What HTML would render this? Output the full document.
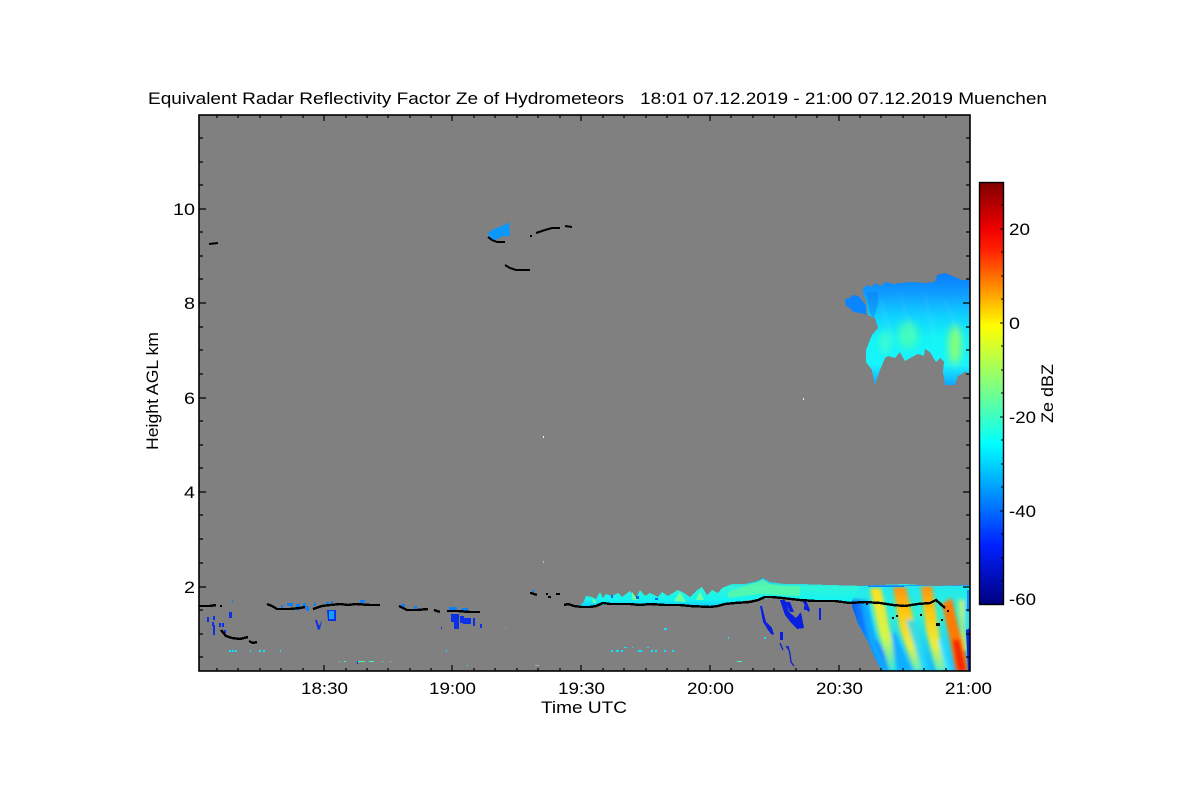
<!DOCTYPE html>
<html><head><meta charset="utf-8"><style>
html,body{margin:0;padding:0;background:#fff;width:1200px;height:800px;overflow:hidden}
svg{display:block}
text{font-family:"Liberation Sans",sans-serif;fill:#000;font-size:17px}
.j{shape-rendering:crispEdges}
</style></head><body>
<svg width="1200" height="800" viewBox="0 0 1200 800" xmlns="http://www.w3.org/2000/svg">
<defs>
<linearGradient id="jet" x1="0" y1="0" x2="0" y2="1">
<stop offset="0" stop-color="#800000"/><stop offset=".11" stop-color="#f00000"/><stop offset=".16" stop-color="#ff2000"/><stop offset=".34" stop-color="#ffff00"/><stop offset=".5" stop-color="#70ff90"/><stop offset=".62" stop-color="#00ffff"/><stop offset=".86" stop-color="#0020ff"/><stop offset="1" stop-color="#000080"/>
</linearGradient>
<linearGradient id="cloud" x1="0" y1="0" x2="0" y2="1">
<stop offset="0" stop-color="#0a7cff"/><stop offset=".2" stop-color="#10a0ff"/><stop offset=".38" stop-color="#10d0ff"/><stop offset=".58" stop-color="#14f4f4"/><stop offset=".82" stop-color="#18f4ff"/><stop offset="1" stop-color="#10a8ff"/>
</linearGradient>
<linearGradient id="band" x1="0" y1="0" x2="0" y2="1">
<stop offset="0" stop-color="#10b0ff"/><stop offset=".3" stop-color="#30f4d8"/><stop offset=".75" stop-color="#14f4f0"/><stop offset="1" stop-color="#10c8ff"/>
</linearGradient>
<linearGradient id="storm" x1="0" y1="0" x2="0" y2="1">
<stop offset="0" stop-color="#20e8f0"/><stop offset=".35" stop-color="#30f0d8"/><stop offset="1" stop-color="#14b8ff"/>
</linearGradient>
<linearGradient id="yl" x1="0" y1="0" x2="0" y2="1">
<stop offset="0" stop-color="#ffe020"/><stop offset=".6" stop-color="#d0f850"/><stop offset="1" stop-color="#30e8e0"/>
</linearGradient>
<linearGradient id="or" x1="0" y1="0" x2="0" y2="1">
<stop offset="0" stop-color="#ff9010"/><stop offset=".3" stop-color="#ffc810"/><stop offset=".7" stop-color="#e8f040"/><stop offset="1" stop-color="#60f0c0"/>
</linearGradient>
<filter id="b1" x="-30%" y="-30%" width="160%" height="160%"><feGaussianBlur stdDeviation="1.8"/></filter>
<filter id="b2" x="-40%" y="-40%" width="180%" height="180%"><feGaussianBlur stdDeviation="4"/></filter>
<clipPath id="stormClip"><path d="M860 586L880 585L905 584L935 586L970 585V671H882L876 660L868 642L858 624L852 606L852 600Z"/></clipPath>
<clipPath id="cloudClip"><path d="M863 288L868 284L880 285L886 282L900 283L935 282L937 275L945 273L955 277L970 280V375L965 371L958 376L955 385L945 385L943 370L938 360L930 352L925 349L924 356L910 357L905 361L900 355L885 358L880 370L875 385L872 370L866 360L866 350L872 335L878 328L875 318L868 315L866 298L863 295Z"/></clipPath>
</defs>
<rect width="1200" height="800" fill="#fff"/>
<rect x="199" y="115" width="771" height="556" fill="#808080"/>

<!-- upper right cloud -->
<path class="j" d="M845 299L850 298L852 295L858 296L862 300L866 306L866 315L860 313L853 312L850 308L846 306Z" fill="#0a84ff"/>
<path class="j" d="M863 288L868 285L871 287L875 283L880 286L886 282L893 284L900 283L912 282L925 283L935 282L937 275L945 273L950 275L955 277L962 280L970 280V375L965 371L962 374L958 376L955 385L945 385L943 372L944 362L940 358L936 362L930 352L925 349L924 356L918 354L912 357L905 361L900 352L895 358L888 356L885 358L880 370L875 385L872 370L866 362L866 350L870 340L872 335L878 328L875 318L868 315L866 300L863 295Z" fill="url(#cloud)"/>
<g clip-path="url(#cloudClip)">
<ellipse cx="955" cy="345" rx="6" ry="20" fill="#90ff70" filter="url(#b2)"/>
<ellipse cx="908" cy="335" rx="10" ry="14" fill="#50ffb0" filter="url(#b2)" opacity=".8"/>
<ellipse cx="885" cy="342" rx="5" ry="12" fill="#50ffc0" filter="url(#b2)" opacity=".8"/>
<path d="M866 292H878V304L874 318L870 314Z" fill="#0a78f0" opacity=".45"/>
<path d="M880 300L895 345M900 295L915 340M925 295L935 340M945 300L960 340" stroke="#ffffff" stroke-width="3" opacity=".07" filter="url(#b1)"/>
</g>

<!-- top features -->
<path class="j" d="M488 233L494 229L502 226L509 222L510 236L503 236L497 239L492 241Z" fill="#0a98ff"/>
<g fill="none" stroke="#000" stroke-width="2">
<path d="M488 237L492 240L497 242H505"/>
<path d="M505 265L510 268L516 270H530"/>
<path d="M536 233L545 230L552 228L560 228M565 226L572 227"/>
<path d="M209 244L218 243"/>
</g>
<rect x="530" y="235" width="2" height="2"/>

<!-- low-level band 19:30-20:40 -->
<path class="j" d="M578 606L583 603L586 596L592 597L596 599L600 592L603 598L606 594L612 596L618 593L622 597L630 591L636 598L640 590L645 596L650 593L658 597L662 592L668 596L678 590L684 593L690 597L696 591L702 587L707 595L712 590L718 593L722 588L732 584L745 584L757 581L763 578L770 582L785 584L800 584L830 585L865 586V603L840 602L800 601L770 598L750 600L738 602L710 607L680 606L650 605L620 605L600 605L588 606Z" fill="url(#band)"/>
<path class="j" d="M728 598V592L745 586L757 582L763 579L770 584L785 586L800 586V596L760 594Z" fill="#60f8a0" opacity=".75"/>
<path d="M593 603L592 598L596 601L596 603ZM632 600L632 592L638 600ZM674 601L680 592L686 602ZM696 600L700 591L704 600Z" fill="#70ffa0"/>
<g fill="#0a60f0">
<rect x="636" y="596" width="3" height="3"/><rect x="611" y="595" width="2" height="3"/><rect x="655" y="598" width="3" height="2"/>
</g>

<!-- streaks below band -->
<g fill="#0a20e0" class="j">
<path d="M760 606L762 606L766 622L772 628L774 634L772 635L768 630L763 622Z"/>
<path d="M780 600L785 600L789 612L796 618L801 612L804 628L797 629L792 624L785 615Z"/>
<path d="M785 602L790 602L794 612L790 612Z"/>
<path d="M802 600L806 600L810 610L808 612Z"/>
<rect x="780" y="632" width="3" height="8"/>
<rect x="819" y="608" width="2" height="12"/>
<rect x="804" y="606" width="3" height="4"/>
</g>
<g fill="none" stroke="#0a20d0" stroke-width="1.3">
<path d="M780 643L783 650M788 646L790 654L791 662L794 666M786 646L789 650"/>
</g>

<!-- low cyan speckles -->
<g fill="#10e0ff">
<rect x="229" y="650" width="2" height="2"/><rect x="232" y="650" width="2" height="2"/><rect x="235" y="650" width="2" height="2"/><rect x="250" y="650" width="1" height="2"/><rect x="259" y="650" width="2" height="2"/><rect x="263" y="650" width="2" height="2"/><rect x="280" y="650" width="1" height="2"/><rect x="446" y="650" width="1" height="2"/>
<rect x="611" y="650" width="2" height="2"/><rect x="616" y="650" width="3" height="2"/><rect x="621" y="650" width="2" height="2"/><rect x="638" y="650" width="4" height="2"/><rect x="651" y="650" width="2" height="2"/><rect x="655" y="650" width="2" height="2"/><rect x="664" y="650" width="2" height="2"/><rect x="672" y="650" width="2" height="2"/>
<rect x="624" y="647" width="3" height="1"/><rect x="632" y="647" width="1" height="1"/><rect x="647" y="647" width="2" height="1"/><rect x="664" y="628" width="3" height="2"/><rect x="728" y="637" width="1" height="2"/><rect x="764" y="637" width="2" height="2"/>
</g>
<g fill="#40ffb0">
<rect x="339" y="661" width="1" height="1"/><rect x="344" y="661" width="2" height="1"/><rect x="358" y="661" width="7" height="1"/><rect x="369" y="661" width="5" height="1"/><rect x="382" y="661" width="1" height="1"/><rect x="390" y="661" width="1" height="1"/><rect x="737" y="661" width="5" height="1"/><rect x="467" y="665" width="1" height="1"/>
</g>
<rect x="357" y="661" width="1" height="3" fill="#1040d0"/>
<rect x="543" y="436" width="1" height="2" fill="#cfe"/><rect x="803" y="398" width="1" height="2" fill="#cfe"/><rect x="543" y="561" width="1" height="2" fill="#bbc"/>
<rect x="505" y="628" width="1" height="1" fill="#aaa"/><rect x="535" y="665" width="4" height="1" fill="#aaa"/>

<!-- blue low-left streaks -->
<g fill="#0a30e8">
<rect x="207" y="617" width="2" height="5"/><rect x="213" y="616" width="2" height="4"/><rect x="212" y="622" width="2" height="4"/><rect x="213" y="625" width="2" height="10"/><rect x="219" y="623" width="2" height="4"/><rect x="222" y="623" width="2" height="4"/><rect x="229" y="612" width="3" height="6"/><rect x="224" y="630" width="2" height="3"/>
<path d="M315 620L317 620L319 626L322 620L320 629L318 630Z"/>
<path d="M327 610H336V621H328Z"/>
<rect x="451" y="614" width="8" height="8"/><rect x="454" y="620" width="5" height="9"/><rect x="460" y="616" width="4" height="7"/><rect x="463" y="618" width="8" height="6"/><rect x="473" y="618" width="2" height="8"/><rect x="480" y="624" width="2" height="4"/><rect x="441" y="627" width="1" height="2"/>
</g>
<rect x="329" y="611" width="5" height="8" fill="#10a0ff"/>
<g fill="#0a80ff">
<rect x="232" y="600" width="1" height="3"/><rect x="281" y="605" width="2" height="4"/><rect x="287" y="603" width="6" height="3"/><rect x="296" y="604" width="4" height="6"/><rect x="303" y="603" width="3" height="4"/><rect x="306" y="606" width="3" height="5"/><rect x="314" y="603" width="2" height="3"/><rect x="326" y="602" width="3" height="3"/><rect x="364" y="600" width="1" height="3"/><rect x="331" y="601" width="2" height="2"/><rect x="360" y="600" width="4" height="3"/><rect x="401" y="604" width="4" height="5"/><rect x="414" y="606" width="3" height="3"/><rect x="449" y="607" width="8" height="5"/><rect x="462" y="608" width="6" height="3"/><rect x="532" y="590" width="2" height="3"/>
</g>

<!-- storm -->
<path class="j" d="M860 586L880 585L905 584L935 586L970 585V671H882L876 660L868 642L858 624L852 606L852 600Z" fill="url(#storm)"/>
<g clip-path="url(#stormClip)">
<g filter="url(#b1)">
<path d="M850 600H860L868 625L880 645L895 671H875Z" fill="#0a70ff"/>
<path d="M846 604H852L862 640L878 671H872Z" fill="#0020d0"/>
<path d="M860 600H868L876 640L888 671H880L868 640Z" fill="#10a8ff"/>
<path d="M888 635L895 632L912 671H898Z" fill="#10b0ff"/>
<path d="M870 588H881L892 640L896 671H889L878 630Z" fill="url(#yl)"/>
<path d="M893 587H906L918 640L924 671H914L900 630Z" fill="url(#or)"/>
<path d="M921 586H932L940 640L946 671H936L926 630Z" fill="url(#or)"/>
<path d="M906 620H914L930 671H922Z" fill="#20d8ff" opacity=".8"/>
<path d="M938 640L944 640L952 671H946Z" fill="#30e0ff"/>
<path d="M942 604L952 598L958 625L965 650L968 671H956L950 640Z" fill="#ff7a00"/>
<path d="M958 600H964V625L968 650H963Z" fill="#f8f040" opacity=".7"/>
<path d="M964 600H970V630L966 625Z" fill="#20e0f0"/>
</g>
<path d="M953 640H959L966 671H958Z" fill="#f42000" filter="url(#b1)"/>
<path d="M966 630L970 628V671H968Z" fill="#0a28e0"/>
<rect x="967" y="590" width="3" height="22" fill="#1090ff"/>
<rect x="868" y="585" width="36" height="2" fill="#0a80ff"/>
<rect x="860" y="585" width="110" height="1" fill="#1aa0ff"/>
</g>

<!-- black lines -->
<g fill="none" stroke="#000" stroke-width="2.4" class="j">
<path d="M199 606L210 606L216 605M220 606L222 606"/>
<path d="M221 630L226 636L232 638L240 639M240 639L248 637M249 641L253 643L257 642"/>
<path d="M267 604L272 606L277 609L290 609L300 608L305 607M313 609L322 606L330 605L340 604L348 605L356 604L370 605L380 605"/>
<path d="M399 606L407 610L417 610L428 609M434 610L440 612M447 611L458 611L470 612L480 612"/>
<path d="M531 593L537 595M548 597L551 597M556 594L560 594"/>
<path d="M564 605L568 604L574 606L582 607L590 607L596 606L603 603L610 604L618 604L630 604L640 605L650 604L665 605L680 605L690 606L710 607L718 606L725 604L735 603L750 602L758 600L765 597L772 597L782 598L800 600L815 601L835 601L850 603L865 602L880 603L893 605L905 606L918 604L930 603L936 600L945 608"/>
</g>
<g fill="#000">
<rect x="892" y="617" width="2" height="2"/><rect x="896" y="615" width="2" height="2"/><rect x="920" y="614" width="2" height="2"/><rect x="936" y="623" width="4" height="3"/><rect x="941" y="619" width="2" height="2"/><rect x="947" y="610" width="2" height="2"/><rect x="866" y="603" width="2" height="2"/><rect x="530" y="592" width="2" height="2"/><rect x="546" y="593" width="2" height="2"/>
</g>

<!-- axes frame -->
<rect x="199" y="115" width="771" height="556" fill="none" stroke="#000" stroke-width="1.6"/>
<path stroke="#000" stroke-width="1.2" fill="none" d="M217 671v-3M238 671v-3M260 671v-3M281 671v-3M303 671v-3M324 671v-6M346 671v-3M367 671v-3M388 671v-3M410 671v-3M431 671v-3M452 671v-6M474 671v-3M495 671v-3M517 671v-3M538 671v-3M560 671v-3M581 671v-6M603 671v-3M624 671v-3M646 671v-3M667 671v-3M688 671v-3M710 671v-6M731 671v-3M753 671v-3M774 671v-3M796 671v-3M817 671v-3M839 671v-6M860 671v-3M881 671v-3M903 671v-3M924 671v-3M946 671v-3
M217 115v3M238 115v3M260 115v3M281 115v3M303 115v3M324 115v6M346 115v3M367 115v3M388 115v3M410 115v3M431 115v3M452 115v6M474 115v3M495 115v3M517 115v3M538 115v3M560 115v3M581 115v6M603 115v3M624 115v3M646 115v3M667 115v3M688 115v3M710 115v6M731 115v3M753 115v3M774 115v3M796 115v3M817 115v3M839 115v6M860 115v3M881 115v3M903 115v3M924 115v3M946 115v3
M199 138h4M199 162h4M199 185h4M199 209h7M199 232h4M199 256h4M199 279h4M199 303h7M199 327h4M199 350h4M199 374h4M199 398h7M199 421h4M199 445h4M199 468h4M199 492h7M199 515h4M199 539h4M199 563h4M199 587h7M199 610h4M199 634h4M199 657h4
M970 138h-4M970 162h-4M970 185h-4M970 209h-7M970 232h-4M970 256h-4M970 279h-4M970 303h-7M970 327h-4M970 350h-4M970 374h-4M970 398h-7M970 421h-4M970 445h-4M970 468h-4M970 492h-7M970 515h-4M970 539h-4M970 563h-4M970 587h-7M970 610h-4M970 634h-4M970 657h-4"/>

<!-- colorbar -->
<rect x="979.5" y="182.5" width="24" height="422" fill="url(#jet)" stroke="#000" stroke-width="1.4"/>
<path stroke="#000" stroke-width="1" fill="none" d="M1003 205h-2M1003 229h-3M1003 252h-2M1003 276h-2M1003 299h-2M1003 323h-3M1003 346h-2M1003 370h-2M1003 393h-2M1003 417h-3M1003 440h-2M1003 464h-2M1003 487h-2M1003 511h-3M1003 534h-2M1003 558h-2M1003 581h-2"/>

<!-- text -->
<text x="148" y="104" textLength="476" lengthAdjust="spacingAndGlyphs">Equivalent Radar Reflectivity Factor Ze of Hydrometeors</text>
<text x="640" y="104" textLength="407" lengthAdjust="spacingAndGlyphs">18:01 07.12.2019 - 21:00 07.12.2019 Muenchen</text>
<text x="301" y="694" textLength="47" lengthAdjust="spacingAndGlyphs">18:30</text>
<text x="429" y="694" textLength="47" lengthAdjust="spacingAndGlyphs">19:00</text>
<text x="558" y="694" textLength="47" lengthAdjust="spacingAndGlyphs">19:30</text>
<text x="687" y="694" textLength="47" lengthAdjust="spacingAndGlyphs">20:00</text>
<text x="816" y="694" textLength="47" lengthAdjust="spacingAndGlyphs">20:30</text>
<text x="945" y="694" textLength="47" lengthAdjust="spacingAndGlyphs">21:00</text>
<text x="541" y="713" textLength="86" lengthAdjust="spacingAndGlyphs">Time UTC</text>
<text x="173" y="215" textLength="22" lengthAdjust="spacingAndGlyphs">10</text>
<text x="184" y="309" textLength="11" lengthAdjust="spacingAndGlyphs">8</text>
<text x="184" y="404" textLength="11" lengthAdjust="spacingAndGlyphs">6</text>
<text x="184" y="498" textLength="11" lengthAdjust="spacingAndGlyphs">4</text>
<text x="184" y="593" textLength="11" lengthAdjust="spacingAndGlyphs">2</text>
<text transform="translate(158 450) rotate(-90)" textLength="118" lengthAdjust="spacingAndGlyphs">Height AGL km</text>
<text x="1009" y="235" textLength="21" lengthAdjust="spacingAndGlyphs">20</text>
<text x="1009" y="329" textLength="11" lengthAdjust="spacingAndGlyphs">0</text>
<text x="1009" y="423" textLength="27" lengthAdjust="spacingAndGlyphs">-20</text>
<text x="1009" y="517" textLength="27" lengthAdjust="spacingAndGlyphs">-40</text>
<text x="1009" y="605" textLength="27" lengthAdjust="spacingAndGlyphs">-60</text>
<text transform="translate(1053 423) rotate(-90)" textLength="59" lengthAdjust="spacingAndGlyphs">Ze dBZ</text>
</svg>
</body></html>
